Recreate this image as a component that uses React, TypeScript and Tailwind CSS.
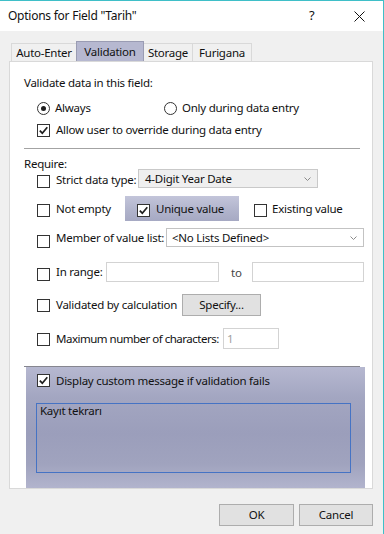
import React from 'react';

function Check({ checked = false, className = '' }: { checked?: boolean; className?: string }) {
  return (
    <span
      className={`w-[13px] h-[13px] border border-[#333333] bg-white flex items-center justify-center shrink-0 ${className}`}
    >
      {checked && (
        <svg width="11" height="11" viewBox="0 0 11 11">
          <path d="M1.8 5.6 L4.3 8.2 L9.3 2.2" stroke="#1f1f1f" strokeWidth="1.7" fill="none" />
        </svg>
      )}
    </span>
  );
}

function Radio({ checked = false }: { checked?: boolean }) {
  return (
    <span className="w-[13px] h-[13px] rounded-full border border-[#333333] bg-white flex items-center justify-center shrink-0">
      {checked && <span className="w-[5px] h-[5px] rounded-full bg-[#1f1f1f]" />}
    </span>
  );
}

function Chevron() {
  return (
    <svg width="7" height="4" viewBox="0 0 7 4" className="shrink-0">
      <path d="M0.5 0.5 L3.5 3.5 L6.5 0.5" stroke="#8a8a8a" strokeWidth="1" fill="none" />
    </svg>
  );
}

const tabs = [
  { label: 'Auto-Enter', w: 'w-[66px]', active: false },
  { label: 'Validation', w: 'w-[68px]', active: true },
  { label: 'Storage', w: 'w-[50px]', active: false },
  { label: 'Furigana', w: 'w-[60px]', active: false },
];

export default function App() {
  return (
    <div className="w-[384px] h-[534px] bg-[#f0f0f0] border-t border-r border-[#3fbfc8] flex flex-col text-[11.5px] tracking-[-0.25px] text-[#111111] font-['Noto_Sans',sans-serif] overflow-hidden">
      {/* title bar */}
      <div className="h-[30px] bg-white flex items-center pl-[8px] shrink-0">
        <span className="flex-1 text-[12px]">Options for Field "Tarih"</span>
        <span className="w-[8px] mr-[37px] text-[13px]">?</span>
        <svg width="11" height="11" viewBox="0 0 11 11" className="mr-[18px]">
          <path d="M0.5 0.5 L10.5 10.5 M10.5 0.5 L0.5 10.5" stroke="#111" strokeWidth="1" />
        </svg>
      </div>

      {/* tabs */}
      <div className="ml-[11px] mt-[10px] h-[20px] flex items-end shrink-0">
        {tabs.map((t, i) => (
          <div
            key={t.label}
            className={`${t.w} ${i > 0 ? '-ml-px' : ''} flex items-center justify-center border border-b-0 ${
              t.active
                ? 'h-[20px] bg-[#b6b8d0] border-[#9a9cb3] relative z-10'
                : 'h-[18px] bg-[#f0f0f0] border-[#d9d9d9]'
            }`}
          >
            {t.label}
          </div>
        ))}
      </div>

      {/* panel */}
      <div className="ml-[9px] w-[364px] h-[428px] bg-white border border-[#d9d9d9] flex flex-col shrink-0">
        <div className="pl-[14px] flex flex-col">
          <div className="mt-[13px] h-[16px] leading-[16px]">Validate data in this field:</div>

          <div className="mt-[9px] h-[16px] pl-[13px] flex items-center">
            <div className="w-[127px] flex items-center gap-[5px]">
              <Radio checked />
              <span>Always</span>
            </div>
            <div className="flex items-center gap-[5px]">
              <Radio />
              <span>Only during data entry</span>
            </div>
          </div>

          <div className="mt-[6px] h-[16px] pl-[13px] flex items-center gap-[6px]">
            <Check checked />
            <span>Allow user to override during data entry</span>
          </div>

          <div className="mt-[10px] w-[336px] h-px bg-[#a3a3a3]" />

          <div className="mt-[8px] h-[12px] leading-[14px]">Require:</div>

          {/* strict data type */}
          <div className="h-[19px] pl-[13px] flex items-center">
            <Check className="self-end" />
            <span className="ml-[6px] w-[82px] whitespace-nowrap pt-[2px]">Strict data type:</span>
            <div className="w-[180px] h-[19px] bg-[#efefef] border border-[#c9c9c9] flex items-center pl-[6px] pr-[6px]">
              <span className="flex-1">4-Digit Year Date</span>
              <Chevron />
            </div>
          </div>

          {/* not empty / unique / existing */}
          <div className="mt-[8px] h-[25px] pl-[13px] flex items-center">
            <Check className="translate-y-[2px]" />
            <span className="ml-[6px] w-[69px] whitespace-nowrap">Not empty</span>
            <div className="w-[114px] h-[25px] bg-[linear-gradient(180deg,#c3c5da_0%,#b0b3cb_60%,#a6a9c3_100%)] flex items-center pl-[12px] gap-[6px]">
              <Check checked className="translate-y-[2px]" />
              <span>Unique value</span>
            </div>
            <Check className="ml-[15px] translate-y-[2px]" />
            <span className="ml-[5px] whitespace-nowrap">Existing value</span>
          </div>

          {/* value list */}
          <div className="mt-[7px] h-[20px] pl-[13px] flex items-center">
            <Check className="self-end" />
            <span className="ml-[6px] w-[110px] whitespace-nowrap">Member of value list:</span>
            <div className="self-start w-[198px] h-[19px] bg-white border border-[#c3c3c3] flex items-center pl-[5px] pr-[6px]">
              <span className="flex-1">&lt;No Lists Defined&gt;</span>
              <Chevron />
            </div>
          </div>

          {/* in range */}
          <div className="mt-[14px] h-[20px] pl-[13px] flex items-center">
            <Check className="translate-y-[2px]" />
            <span className="ml-[6px] w-[50px] whitespace-nowrap">In range:</span>
            <div className="w-[113px] h-[20px] bg-white border border-[#d3d3d3]" />
            <span className="w-[33px] pl-[12px] text-[#444444] translate-y-[1px]">to</span>
            <div className="w-[112px] h-[20px] bg-white border border-[#d3d3d3]" />
          </div>

          {/* calculation */}
          <div className="mt-[12px] h-[22px] pl-[13px] flex items-center">
            <Check />
            <span className="ml-[6px] w-[126px] whitespace-nowrap">Validated by calculation</span>
            <div className="w-[79px] h-[22px] bg-[#e1e1e1] border border-[#adadad] flex items-center justify-center">
              Specify...
            </div>
          </div>

          {/* max chars */}
          <div className="mt-[12px] h-[21px] pl-[13px] flex items-center">
            <Check className="translate-y-[1px]" />
            <span className="ml-[6px] w-[167px] whitespace-nowrap tracking-[-0.5px]">Maximum number of characters:</span>
            <div className="w-[56px] h-[21px] bg-white border border-[#d3d3d3] flex items-center pl-[3px] text-[#a0a0a0]">
              1
            </div>
          </div>

          <div className="mt-[17px] w-[336px] h-px bg-[#86868f]" />
        </div>

        {/* custom message */}
        <div className="ml-[16px] w-[339px] flex-1 bg-[linear-gradient(180deg,#b6b8d0_0%,#a3a6c1_25%,#9b9ebb_55%,#a0a3be_80%,#b2b4cd_100%)] flex flex-col">
          <div className="mt-[7px] h-[13px] pl-[11px] flex items-center gap-[6px]">
            <Check checked />
            <span className="whitespace-nowrap">Display custom message if validation fails</span>
          </div>
          <div className="mt-[16px] ml-[10px] w-[315px] h-[70px] border border-[#4573c4] pl-[3px] leading-[14px]">
            Kayıt tekrarı
          </div>
        </div>
      </div>

      {/* buttons */}
      <div className="ml-[9px] w-[364px] mt-[15px] flex justify-end gap-[5px]">
        <div className="w-[75px] h-[22px] bg-[#e1e1e1] border border-[#adadad] flex items-center justify-center">OK</div>
        <div className="w-[74px] h-[22px] bg-[#e1e1e1] border border-[#adadad] flex items-center justify-center">Cancel</div>
      </div>
    </div>
  );
}
